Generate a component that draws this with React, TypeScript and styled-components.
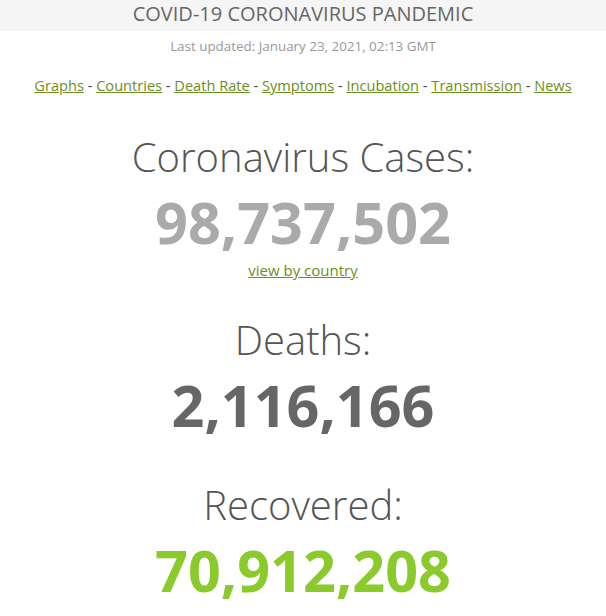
import React from "react";
import styled, { createGlobalStyle } from "styled-components";

const Global = createGlobalStyle`
  body {
    margin: 0;
    background: #fff;
    font-family: "Open Sans", "Noto Sans", "Liberation Sans", sans-serif;
  }
`;

const links = [
  "Graphs",
  "Countries",
  "Death Rate",
  "Symptoms",
  "Incubation",
  "Transmission",
  "News",
];

export default function App() {
  return (
    <>
      <Global />
      <Page>
        <Header>COVID-19 CORONAVIRUS PANDEMIC</Header>
        <Updated>Last updated: January 23, 2021, 02:13 GMT</Updated>
        <Nav>
          {links.map((l, i) => (
            <React.Fragment key={l}>
              {i > 0 && <Sep> - </Sep>}
              <Link href="#">{l}</Link>
            </React.Fragment>
          ))}
        </Nav>
        <Counter>
          <Label>Coronavirus Cases:</Label>
          <Number color="#aaaaaa">98,737,502</Number>
          <SmallLink href="#">view by country</SmallLink>
        </Counter>
        <Counter>
          <Label>Deaths:</Label>
          <Number color="#666666">2,116,166</Number>
        </Counter>
        <Counter>
          <Label>Recovered:</Label>
          <Number color="#8aca2b">70,912,208</Number>
        </Counter>
      </Page>
    </>
  );
}

const Page = styled.div`
  display: flex;
  flex-direction: column;
  align-items: center;
  width: 100%;
`;

const Header = styled.div`
  width: 100%;
  height: 31px;
  background: #f5f5f5;
  color: #666;
  font-size: 20px;
  line-height: 28px;
  text-align: center;
`;

const Updated = styled.div`
  margin-top: 6px;
  font-size: 13.4px;
  color: #999;
  line-height: 18px;
`;

const Nav = styled.div`
  margin-top: 20px;
  font-size: 14.6px;
  line-height: 20px;
  color: #444;
`;

const Sep = styled.span`
  white-space: pre;
`;

const Link = styled.a`
  color: #6b8e23;
  text-decoration: underline;
`;

const Counter = styled.div`
  display: flex;
  flex-direction: column;
  align-items: center;
  margin-top: 37px;
  & + & {
    margin-top: 35px;
  }
`;

const Label = styled.div`
  font-size: 40px;
  font-weight: 300;
  color: #555;
  line-height: 50px;
`;

const Number = styled.div<{ color: string }>`
  font-size: 57.5px;
  font-weight: 700;
  color: ${(p) => p.color};
  line-height: 80px;
`;

const SmallLink = styled(Link)`
  font-size: 15px;
  line-height: 20px;
  margin-top: -2px;
`;
